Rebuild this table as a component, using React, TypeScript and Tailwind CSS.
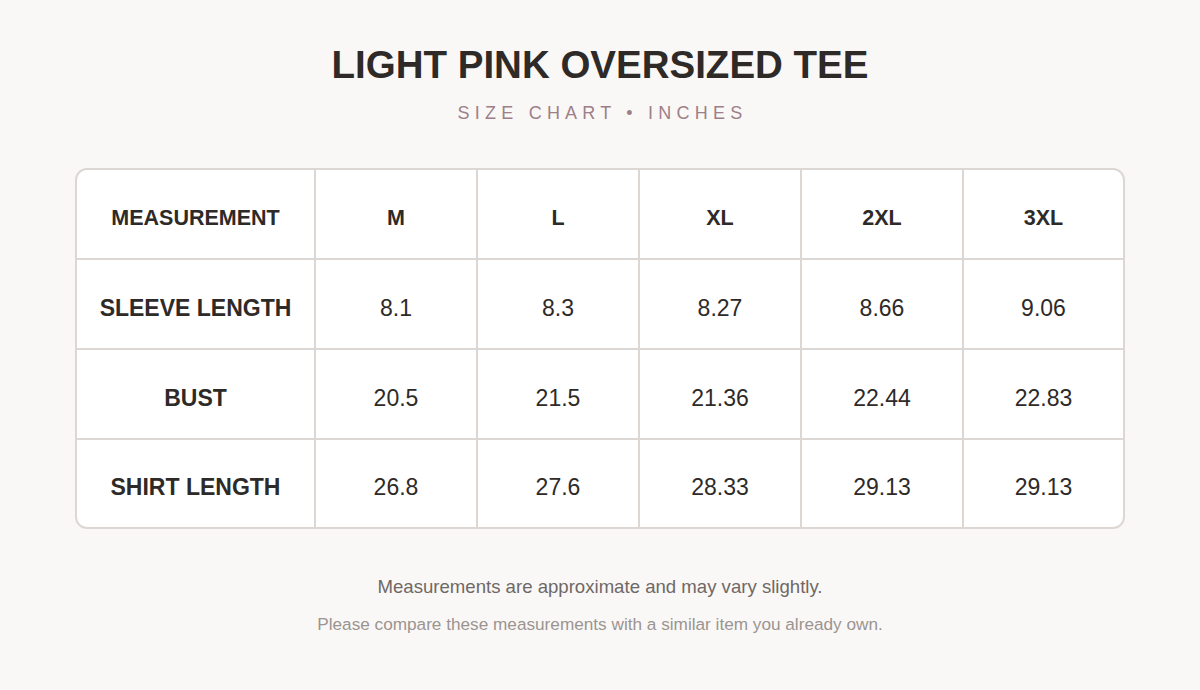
import React from "react";

const sizes = ["M", "L", "XL", "2XL", "3XL"];
const rows: { label: string; values: string[] }[] = [
  { label: "SLEEVE LENGTH", values: ["8.1", "8.3", "8.27", "8.66", "9.06"] },
  { label: "BUST", values: ["20.5", "21.5", "21.36", "22.44", "22.83"] },
  { label: "SHIRT LENGTH", values: ["26.8", "27.6", "28.33", "29.13", "29.13"] },
];

export default function App() {
  return (
    <div
      className="w-[1200px] h-[690px] bg-[#faf8f6] flex flex-col items-center text-[#2e2a28]"
      style={{ fontFamily: '"Liberation Sans", Arial, sans-serif' }}
    >
      <h1 className="mt-[43px] text-[38.5px] leading-[44px] font-bold">LIGHT PINK OVERSIZED TEE</h1>
      <div className="mt-[15px] pl-[5px] text-[18px] leading-[22px] tracking-[0.29em] text-[#9d7f89]">
        SIZE CHART • INCHES
      </div>
      <div className="mt-[44px] w-[1050px] h-[361px] border-2 border-[#ddd7d3] rounded-[12px] overflow-hidden bg-white grid grid-cols-[239px_162px_162px_162px_162px_1fr] grid-rows-[90px_90px_90px_1fr]">
        <div className="flex items-center justify-center pt-[8px] border-r-2 border-b-2 border-[#ddd7d3] text-[21.5px] font-bold">
          MEASUREMENT
        </div>
        {sizes.map((s, i) => (
          <div
            key={s}
            className={
              "flex items-center justify-center pt-[8px] border-b-2 border-[#ddd7d3] text-[21.5px] font-bold " +
              (i < 4 ? "border-r-2" : "")
            }
          >
            {s}
          </div>
        ))}
        {rows.map((r, ri) => (
          <React.Fragment key={r.label}>
            <div
              className={
                "flex items-center justify-center pt-[8px] border-r-2 border-[#ddd7d3] text-[23px] font-bold " +
                (ri < 2 ? "border-b-2" : "")
              }
            >
              {r.label}
            </div>
            {r.values.map((v, i) => (
              <div
                key={i}
                className={
                  "flex items-center justify-center pt-[8px] border-[#ddd7d3] text-[23px] " +
                  (i < 4 ? "border-r-2 " : "") +
                  (ri < 2 ? "border-b-2" : "")
                }
              >
                {v}
              </div>
            ))}
          </React.Fragment>
        ))}
      </div>
      <p className="mt-[47px] text-[18.6px] leading-[22px] text-[#6f6866]">
        Measurements are approximate and may vary slightly.
      </p>
      <p className="mt-[16px] text-[17.2px] leading-[20px] text-[#9b9491]">
        Please compare these measurements with a similar item you already own.
      </p>
    </div>
  );
}
